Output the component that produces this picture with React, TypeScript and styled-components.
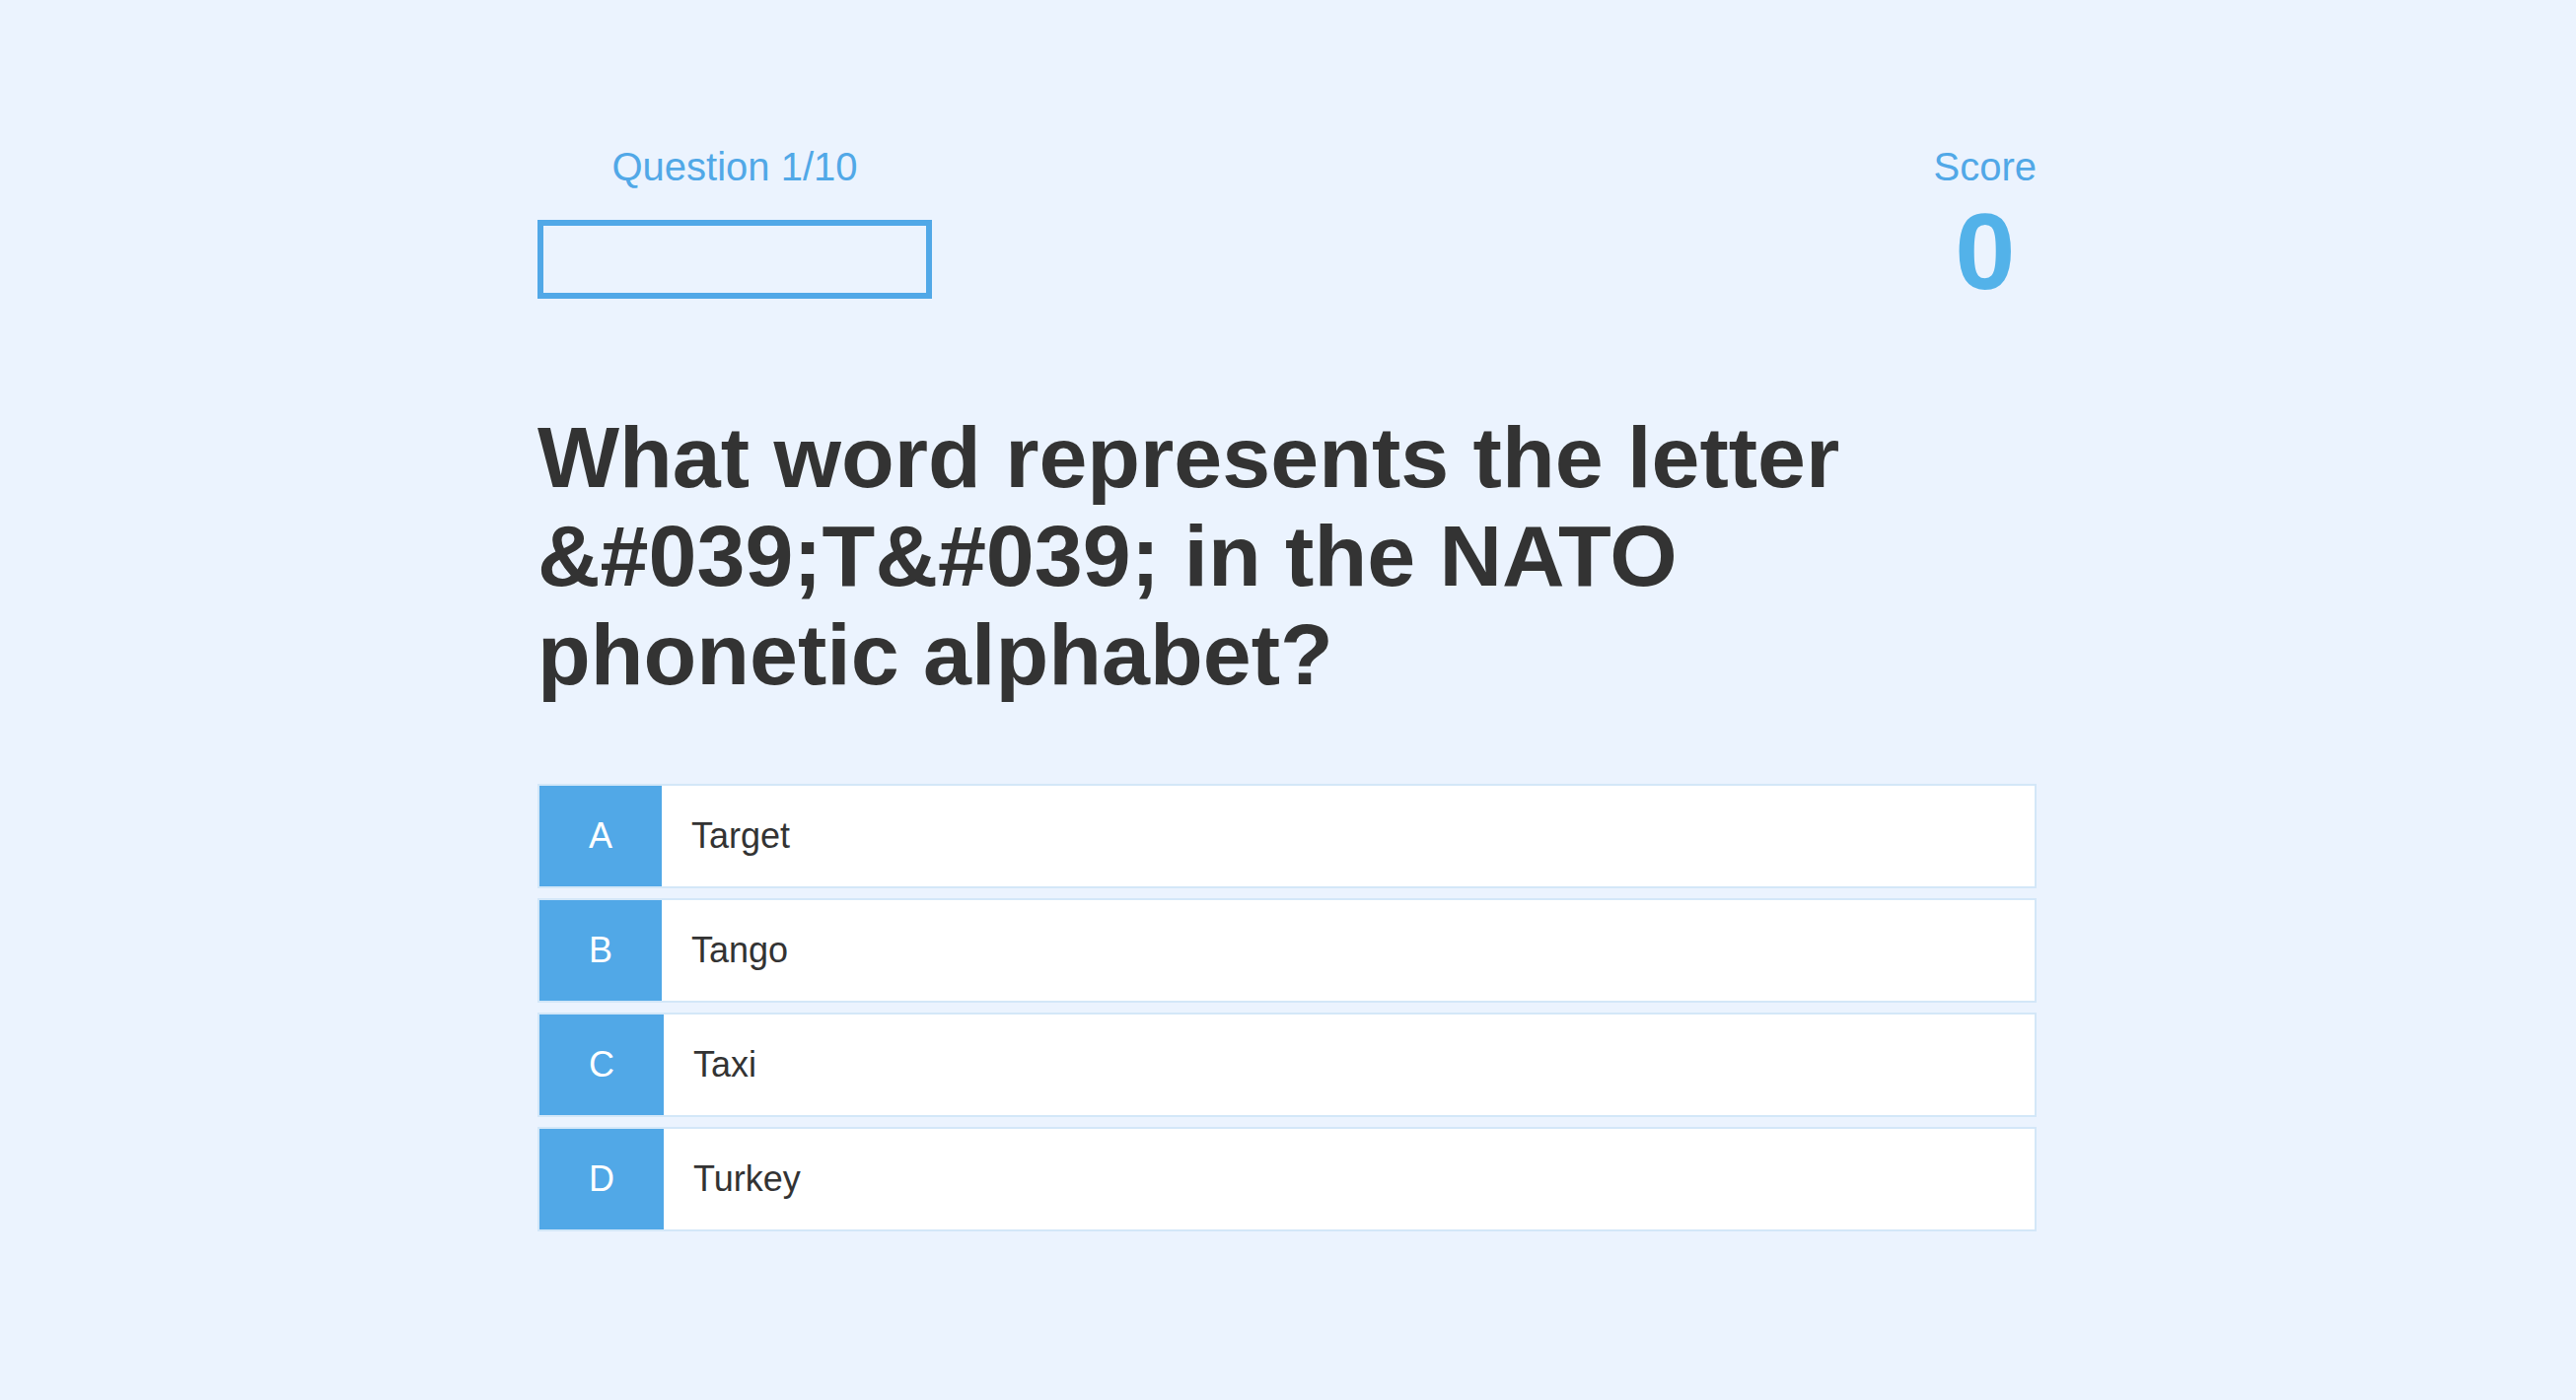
import React from "react";
import styled, { createGlobalStyle } from "styled-components";

const GlobalStyle = createGlobalStyle`
  html, body {
    margin: 0;
    padding: 0;
    background: #ebf3fe;
    font-family: "Liberation Sans", Arial, Helvetica, sans-serif;
  }
  * { box-sizing: border-box; }
`;

const Page = styled.main`
  min-height: 100vh;
  background: #ebf3fe;
  padding-top: 147px;
`;

const Container = styled.div`
  width: 1520px;
  margin: 0 0 0 calc(50% - 761px);
`;

const Header = styled.header`
  display: flex;
  justify-content: space-between;
  align-items: flex-start;
`;

const StatColumn = styled.div<{ $width?: number }>`
  display: flex;
  flex-direction: column;
  align-items: center;
  width: ${(p) => (p.$width ? `${p.$width}px` : "auto")};
`;

const StatLabel = styled.div`
  font-size: 40px;
  line-height: 45px;
  color: #51a8e7;
`;

const ProgressBox = styled.div`
  margin-top: 31px;
  width: 400px;
  height: 80px;
  border: 6px solid #51a8e7;
`;

const ScoreValue = styled.div`
  font-size: 110px;
  font-weight: 700;
  line-height: 126px;
  color: #53b2e9;
`;

const Question = styled.h1`
  margin: 96px 0 0;
  font-size: 88px;
  line-height: 100px;
  font-weight: 700;
  color: #333333;
`;

const AnswerList = styled.ul`
  list-style: none;
  margin: 81px 0 0;
  padding: 0;
  display: flex;
  flex-direction: column;
  gap: 10px;
`;

const AnswerItem = styled.li`
  display: flex;
  align-items: stretch;
  height: 106px;
  border: 2px solid #d3e7f8;
  background: #ffffff;
  cursor: pointer;
`;

const Letter = styled.span`
  display: flex;
  align-items: center;
  justify-content: center;
  padding: 0 50px;
  background: #51a8e7;
  color: #ffffff;
  font-size: 36px;
`;

const AnswerText = styled.span`
  display: flex;
  align-items: center;
  padding-left: 30px;
  font-size: 36px;
  color: #333333;
`;

const answers = [
  { letter: "A", text: "Target" },
  { letter: "B", text: "Tango" },
  { letter: "C", text: "Taxi" },
  { letter: "D", text: "Turkey" },
];

export default function App() {
  return (
    <>
      <GlobalStyle />
      <Page>
        <Container>
          <Header>
            <StatColumn $width={400}>
              <StatLabel>Question 1/10</StatLabel>
              <ProgressBox />
            </StatColumn>
            <StatColumn>
              <StatLabel>Score</StatLabel>
              <ScoreValue>0</ScoreValue>
            </StatColumn>
          </Header>
          <Question>
            What word represents the letter &amp;#039;T&amp;#039; in the NATO phonetic alphabet?
          </Question>
          <AnswerList>
            {answers.map((a) => (
              <AnswerItem key={a.letter}>
                <Letter>{a.letter}</Letter>
                <AnswerText>{a.text}</AnswerText>
              </AnswerItem>
            ))}
          </AnswerList>
        </Container>
      </Page>
    </>
  );
}
